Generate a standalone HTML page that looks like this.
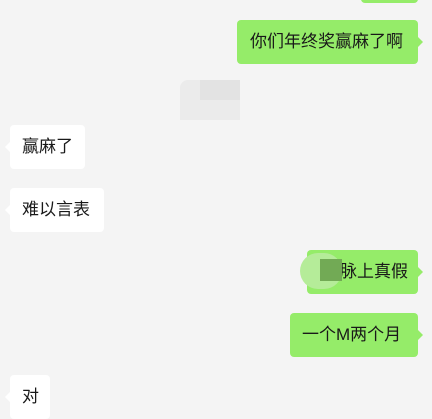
<html><head><style>
body{margin:0;width:432px;height:419px;background:#f4f4f4;position:relative;overflow:hidden;font-family:"Liberation Sans","Noto Sans CJK SC",sans-serif;font-size:17px;color:#191919}
.b{position:absolute;height:44px;line-height:44px;border-radius:4px;padding:0 12px;box-sizing:border-box;white-space:nowrap}
.g{background:#95ec69}.w{background:#fff}
.g:after{content:"";position:absolute;right:-5px;top:17px;border:5px solid transparent;border-right:0;border-left-color:#95ec69}
.w:before{content:"";position:absolute;left:-5px;top:17px;border:5px solid transparent;border-left:0;border-right-color:#fff}
</style></head><body>
<div class="b g" style="left:361px;top:-41px;width:57px"></div>
<div class="b g" style="left:237px;top:20px;width:181px;padding-left:13px">你们年终奖赢麻了啊</div>
<div style="position:absolute;left:180px;top:80px;width:60px;height:40px;background:#ebebeb;border-radius:8px 8px 0 0"></div>
<div style="position:absolute;left:200px;top:80px;width:40px;height:20px;background:#e3e3e3"></div>
<div class="b w" style="left:10px;top:125px;width:75px">赢麻了</div>
<div class="b w" style="left:10px;top:188px;width:94px">难以言表</div>
<div class="b g" style="left:307px;top:250px;width:111px;text-align:right;padding-right:10px">脉上真假</div>
<div style="position:absolute;left:300px;top:253px;width:42px;height:36px;border-radius:18px;background:#b5ec99"></div>
<div style="position:absolute;left:320px;top:259px;width:22px;height:22px;background:#72aa55"></div>
<div class="b g" style="left:290px;top:313px;width:128px">一个M两个月</div>
<div class="b w" style="left:10px;top:375px;width:40px">对</div>
</body></html>
